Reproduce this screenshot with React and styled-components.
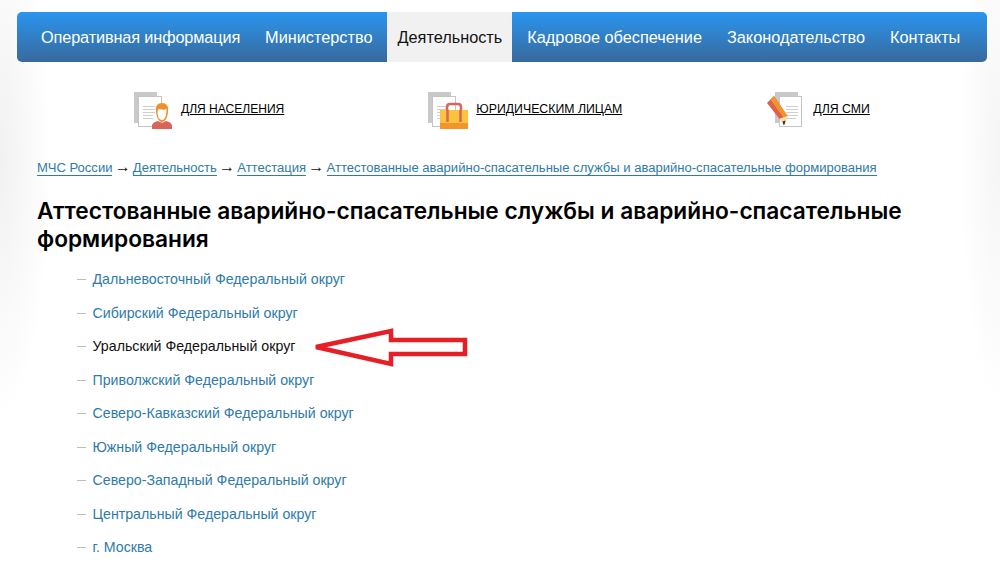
import React from 'react';
import styled, { createGlobalStyle } from 'styled-components';

const GlobalStyle = createGlobalStyle`
    html, body {
        margin: 0;
        padding: 0;
    }
    body {
        background: #fff;
        font-family: "Liberation Sans", Arial, sans-serif;
    }
`;

const menu = ['Оперативная информация', 'Министерство', 'Деятельность', 'Кадровое обеспечение', 'Законодательство', 'Контакты'];
const crumbs = ['МЧС России', 'Деятельность', 'Аттестация', 'Аттестованные аварийно-спасательные службы и аварийно-спасательные формирования'];
const districts = [
    'Дальневосточный Федеральный округ',
    'Сибирский Федеральный округ',
    'Уральский Федеральный округ',
    'Приволжский Федеральный округ',
    'Северо-Кавказский Федеральный округ',
    'Южный Федеральный округ',
    'Северо-Западный Федеральный округ',
    'Центральный Федеральный округ',
    'г. Москва',
];

const Sheets = () => (
    <>
        <rect x="0" y="0" width="23" height="31" fill="#c9c9c9" />
        <rect x="4.5" y="4.5" width="23" height="30" fill="#fff" stroke="#c4c4c4" />
        <path d="M9 14.500h12M9 17.500h12M9 20.500h12M9 23.500h10M9 26.500h10" stroke="#cfcfcf" strokeWidth="1" />
    </>
);

const PersonIcon = () => (
    <svg width="40" height="38" viewBox="0 0 40 38">
        <Sheets />
        <path d="M18 37v-4q1-3 6-4l4 2 4-2q5 1 6 4v4z" fill="#d9655a" />
        <path d="M22 19c-1-5 2-8 6-8s7 3 6 8c0 4-2 11-6 11s-6-7-6-11z" fill="#f0902c" />
        <path d="M23.500 20c0-2 1-3 2-3 2 1 5 1 7 0 0 5-1 11-4.500 11s-4.500-5-4.500-8z" fill="#fff" />
    </svg>
);

const CaseIcon = () => (
    <svg width="42" height="38" viewBox="0 0 42 38">
        <Sheets />
        <path d="M19 18v-3q0-3 3-3h8q3 0 3 3v3" fill="none" stroke="#d9655a" strokeWidth="2.500" />
        <rect x="12" y="18" width="28" height="19" fill="#fcc33c" />
        <rect x="12" y="31" width="28" height="6" fill="#f2952b" />
        <path d="M19.500 18v12M32.500 18v12" stroke="#d9655a" strokeWidth="2.500" />
    </svg>
);

const PencilIcon = () => (
    <svg width="36" height="38" viewBox="0 0 36 38">
        <rect x="8" y="0" width="23" height="31" fill="#c9c9c9" />
        <rect x="12.500" y="4.500" width="22" height="30" fill="#fff" stroke="#c4c4c4" />
        <path d="M19 14.500h12M19 17.500h12M19 20.500h12M19 23.500h12M19 26.500h10" stroke="#cfcfcf" strokeWidth="1" />
        <path d="M0 11l7-7 13.500 20-8 3z" fill="#e0604f" />
        <path d="M3.500 7.500l3.500-3.500 13.500 20-4 1.500z" fill="#f2952b" />
        <path d="M12.500 27l8-3-2 8.500-1.500.500z" fill="#f8e0a8" />
        <path d="M15.500 29.500l3-1-1 4-1 .500z" fill="#333" />
    </svg>
);

const quick = [
    { label: 'ДЛЯ НАСЕЛЕНИЯ', Icon: PersonIcon },
    { label: 'ЮРИДИЧЕСКИМ ЛИЦАМ', Icon: CaseIcon },
    { label: 'ДЛЯ СМИ', Icon: PencilIcon },
];

export default function App() {
    return (
        <Page>
            <GlobalStyle />
            <Nav>
                {menu.map((item) => (
                    <NavItem key={item} $active={item === 'Деятельность'}>{item}</NavItem>
                ))}
            </Nav>
            <QuickLinks>
                {quick.map(({ label, Icon }) => (
                    <QuickLink key={label}>
                        <Icon />
                        <span>{label}</span>
                    </QuickLink>
                ))}
            </QuickLinks>
            <Crumbs>
                {crumbs.map((item, i) => (
                    <React.Fragment key={item}>
                        {i > 0 && <Sep>→</Sep>}
                        <Crumb>{item}</Crumb>
                    </React.Fragment>
                ))}
            </Crumbs>
            <Title>Аттестованные аварийно-спасательные службы и аварийно-спасательные формирования</Title>
            <List>
                {districts.map((item) => (
                    <Row key={item} $current={item.startsWith('Уральский')}>{item}</Row>
                ))}
            </List>
            <Arrow width="160" height="42" viewBox="0 0 160 42">
                <path d="M3 20L78 4v9h74v14H78v10z" fill="none" stroke="#e61e25" strokeWidth="4.500" />
            </Arrow>
        </Page>
    );
}

const Page = styled.div`
    position: relative;
    width: 1000px;
    height: 575px;
    overflow: hidden;
    box-sizing: border-box;
    padding: 12px 13px 0 17px;
    background:
        radial-gradient(ellipse 50px 260px at 0 160px, #f1f1f1, rgba(255, 255, 255, 0)),
        radial-gradient(ellipse 40px 260px at 1000px 150px, #f5f5f5, rgba(255, 255, 255, 0)),
        linear-gradient(#fff, #fff);
`;

const Nav = styled.nav`
    display: flex;
    gap: 5px;
    height: 50px;
    padding-left: 14px;
    border-radius: 5px;
    background: linear-gradient(#2a95ef, #38699c);
`;

const NavItem = styled.a`
    display: flex;
    align-items: center;
    padding: 1px 10px 0;
    font-size: 16.300px;
    white-space: nowrap;
    color: ${(p) => (p.$active ? '#111' : '#fff')};
    background: ${(p) => (p.$active ? '#f1f1f1' : 'transparent')};
    &:first-child {
        letter-spacing: -0.130px;
    }
`;

const QuickLinks = styled.div`
    display: flex;
    height: 38px;
    margin-top: 30px;
    padding-left: 117px;
`;

const QuickLink = styled.a`
    display: flex;
    align-items: center;
    gap: 7px;
    margin-right: 144px;
    font-size: 12.050px;
    white-space: nowrap;
    color: #000;
    &:nth-child(2) {
        gap: 6px;
        margin-right: 145px;
        font-size: 12.300px;
    }
    &:nth-child(3) {
        gap: 10px;
        font-size: 12.300px;
    }
    span {
        padding-bottom: 5px;
        text-decoration: underline;
    }
`;

const Crumbs = styled.div`
    margin: 28px 0 0 20px;
    font-size: 13.050px;
    line-height: 18px;
    white-space: nowrap;
`;

const Crumb = styled.a`
    color: #2f7ba8;
    border-bottom: 1px solid #2f7ba8;
`;

const Sep = styled.span`
    margin: 0 2.200px;
    font-size: 16px;
    color: #111;
`;

const Title = styled.h1`
    width: 900px;
    margin: 20px 0 0 20px;
    font-family: Inter, "Liberation Sans", sans-serif;
    font-size: 22.700px;
    font-weight: 600;
    line-height: 28px;
    color: #000;
`;

const List = styled.ul`
    list-style: none;
    margin: 10px 0 0 60px;
    padding: 0;
`;

const Row = styled.li`
    position: relative;
    height: 33.500px;
    padding-left: 15.500px;
    font-size: 14.200px;
    line-height: 33.500px;
    color: ${(p) => (p.$current ? '#111' : '#2f7ba8')};
    &::before {
        content: '';
        position: absolute;
        left: 0;
        top: 16px;
        width: 9px;
        height: 1px;
        background: #bdbdbd;
    }
`;

const Arrow = styled.svg`
    position: absolute;
    left: 313px;
    top: 327px;
`;
